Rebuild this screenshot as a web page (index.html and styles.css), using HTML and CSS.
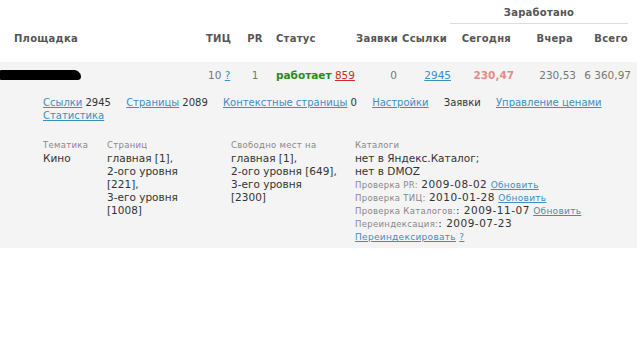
FILE: index.html
```html
<!DOCTYPE html>
<html>
<head>
  <meta charset="utf-8">
  <title>Площадки</title>
  <link rel="stylesheet" href="styles.css">
</head>
<body>
  <table class="sites">
    <colgroup>
      <col class="c-name">
      <col class="c-tic">
      <col class="c-pr">
      <col class="c-status">
      <col class="c-req">
      <col class="c-links">
      <col class="c-today">
      <col class="c-yest">
      <col class="c-total">
    </colgroup>
    <thead>
      <tr class="top">
        <th colspan="6"></th>
        <th colspan="3" class="earned"><div>Заработано</div></th>
      </tr>
      <tr class="heads">
        <th class="name">Площадка</th>
        <th class="tic">ТИЦ</th>
        <th class="pr">PR</th>
        <th class="status">Статус</th>
        <th class="num req">Заявки</th>
        <th class="num lnk">Ссылки</th>
        <th class="num today">Сегодня</th>
        <th class="num yest">Вчера</th>
        <th class="num total">Всего</th>
      </tr>
    </thead>
    <tbody>
      <tr class="site">
        <td class="name"><div class="hidden"></div></td>
        <td class="tic">10 <a href="#">?</a></td>
        <td class="pr">1</td>
        <td class="status"><b class="ok">работает</b> <a href="#" class="red">859</a></td>
        <td class="num req">0</td>
        <td class="num lnk"><a href="#">2945</a></td>
        <td class="num today"><b>230,47</b></td>
        <td class="num yest">230,53</td>
        <td class="num total">6 360,97</td>
      </tr>
      <tr class="more">
        <td colspan="9">
          <div class="tabs">
            <span><a href="#">Ссылки</a> 2945</span>
            <span><a href="#">Страницы</a> 2089</span>
            <span><a href="#">Контекстные страницы</a> 0</span>
            <span><a href="#">Настройки</a></span>
            <span>Заявки</span>
            <span><a href="#">Управление ценами</a></span>
            <span><a href="#">Статистика</a></span>
          </div>
          <div class="info">
            <div>
              <div class="label">Тематика</div>
              <div>Кино</div>
            </div>
            <div>
              <div class="label">Страниц</div>
              <div>главная [1],<br>2-ого уровня<br>[221],<br>3-его уровня<br>[1008]</div>
            </div>
            <div>
              <div class="label">Свободно мест на</div>
              <div>главная [1],<br>2-ого уровня [649],<br>3-его уровня<br>[2300]</div>
            </div>
            <div>
              <div class="label">Каталоги</div>
              <div>нет в Яндекс.Каталог;<br>нет в DMOZ</div>
              <div class="check"><span class="label">Проверка PR:</span> <span class="date">2009-08-02</span> <a href="#" class="small">Обновить</a></div>
              <div class="check"><span class="label">Проверка ТИЦ:</span> <span class="date">2010-01-28</span> <a href="#" class="small">Обновить</a></div>
              <div class="check"><span class="label">Проверка Каталогов:</span><span class="date">: 2009-11-07</span> <a href="#" class="small">Обновить</a></div>
              <div class="check"><span class="label">Переиндексация:</span><span class="date">: 2009-07-23</span></div>
              <div class="check"><a href="#" class="small">Переиндексировать</a> <a href="#" class="small">?</a></div>
            </div>
          </div>
        </td>
      </tr>
    </tbody>
  </table>
</body>
</html>
```

FILE: styles.css
```css
* {
  margin: 0;
  padding: 0;
}
body {
  background: #fff;
  font-family: "DejaVu Sans", Verdana, sans-serif;
  font-size: 10.5px;
  color: #333;
}
a {
  color: #3d8ec4;
}
.sites {
  width: 637px;
  border-collapse: collapse;
  table-layout: fixed;
}
.c-name { width: 200px; }
.c-tic { width: 40px; }
.c-pr { width: 30px; }
.c-status { width: 82px; }
.c-req { width: 48px; }
.c-links { width: 55px; }
.c-today { width: 62px; }
.c-yest { width: 62px; }
.c-total { width: 58px; }

th {
  color: #555;
  font-size: 10px;
  font-weight: bold;
  letter-spacing: 0.25px;
  text-align: left;
  white-space: nowrap;
}
.top th {
  height: 25px;
  vertical-align: top;
}
.earned div {
  margin: 7px 9px 0 -5px;
  padding-bottom: 5px;
  border-bottom: 1px solid #ddd;
  text-align: center;
}
.heads th {
  height: 37px;
  padding-top: 8px;
  vertical-align: top;
  box-sizing: border-box;
}
th.name { padding-left: 14px; }
th.tic { padding-left: 6px; }
th.pr { text-align: center; }
th.status { padding-left: 6px; }
.num { text-align: right; }
th.req { padding-right: 2px; }
th.lnk { padding-right: 8px; }
th.today { padding-right: 6px; }
th.yest { padding-right: 6px; }
th.total { padding-right: 9px; }

.site td {
  height: 26px;
  background: #f4f4f4;
  color: #777;
  white-space: nowrap;
}
.site .hidden {
  width: 80px;
  height: 10px;
  background: #000;
  border-radius: 1px 6px 5px 1px;
  box-shadow: 2px 1px 0 -1px #000;
}
td.tic { padding-left: 8px; }
td.pr { text-align: center; }
td.status { padding-left: 6px; }
.ok { color: #2b8a1e; }
.red { color: #d02b2b; }
td.req { padding-right: 3px; }
td.lnk { padding-right: 4px; }
td.today { padding-right: 3px; color: #e58a8a; }
td.yest { padding-right: 3px; }
td.total { padding-right: 6px; }

.more td {
  background: #f4f4f4;
  padding: 8px 20px 5px 43px;
  line-height: 13px;
}
.tabs {
  font-size: 10px;
  color: #333;
}
.tabs span {
  margin-right: 12px;
  white-space: nowrap;
}
.info {
  display: grid;
  grid-template-columns: 64px 124px 124px 1fr;
  margin-top: 17px;
  line-height: 13px;
}
.label {
  font-size: 8.5px;
  color: #888;
  letter-spacing: 0.3px;
}
.check {
  height: 13px;
  white-space: nowrap;
}
.check .date {
  letter-spacing: 0.5px;
}
.small {
  font-size: 9px;
  letter-spacing: 0.3px;
}
```
